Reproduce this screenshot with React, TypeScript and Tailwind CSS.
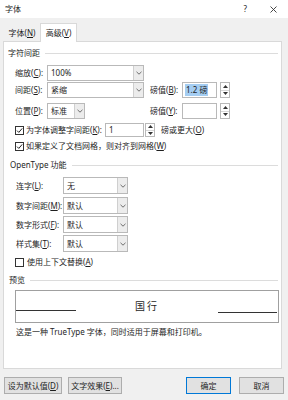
import type { ReactNode } from "react";

function Chevron() {
  return (
    <svg width="6" height="4" viewBox="0 0 6 4">
      <path d="M0.5 0.8 L3 3.2 L5.5 0.8" stroke="#606060" strokeWidth="0.9" fill="none" />
    </svg>
  );
}

function Select({ value, className }: { value: string; className: string }) {
  return (
    <div className={`flex h-full items-stretch border border-[#b9b9b9] bg-white ${className}`}>
      <span className="flex flex-1 items-center pl-[3px]">{value}</span>
      <span className="flex w-[10px] items-center justify-center border-l border-[#cfcfcf] bg-[#ececec]">
        <Chevron />
      </span>
    </div>
  );
}

function Spin() {
  return (
    <div className="flex h-full w-[10px] flex-col border border-[#b9b9b9] bg-white">
      <span className="flex flex-1 items-center justify-center border-b border-[#d6d6d6]">
        <svg width="5" height="3" viewBox="0 0 5 3">
          <path d="M0 3 L2.5 0 L5 3 Z" fill="#333" />
        </svg>
      </span>
      <span className="flex flex-1 items-center justify-center">
        <svg width="5" height="3" viewBox="0 0 5 3">
          <path d="M0 0 L2.5 3 L5 0 Z" fill="#333" />
        </svg>
      </span>
    </div>
  );
}

function Check({ on }: { on?: boolean }) {
  return (
    <span className="flex h-[9px] w-[9px] shrink-0 items-center justify-center border border-[#333] bg-white">
      {on && (
        <svg width="7" height="7" viewBox="0 0 7 7">
          <path d="M1 3.6 L2.8 5.4 L6.2 1.4" stroke="#222" strokeWidth="1" fill="none" />
        </svg>
      )}
    </span>
  );
}

function Key({ text, k, colon = true }: { text: string; k: string; colon?: boolean }) {
  return (
    <span className="whitespace-nowrap">
      {text}(<span className="underline">{k}</span>){colon ? ":" : ""}
    </span>
  );
}

function Group({ title, className }: { title: ReactNode; className: string }) {
  return (
    <div className={`flex h-[12px] items-center pr-[3px] ${className}`}>
      <span className="whitespace-nowrap">{title}</span>
      <span className="ml-[5px] h-px flex-1 bg-[#dcdcdc]" />
    </div>
  );
}

function OtRow({ label, k, value, className }: { label: string; k: string; value: string; className: string }) {
  return (
    <div className={`flex h-[17px] items-center ${className}`}>
      <span className="ml-[12px] w-[47px]">
        <Key text={label} k={k} />
      </span>
      <Select value={value} className="w-[65px]" />
    </div>
  );
}

export default function App() {
  return (
    <div className="h-[400px] w-[288px] overflow-hidden bg-[#f0f0f0] font-['Noto_Sans','Noto_Sans_CJK_SC',sans-serif] text-[8px] leading-[12px] text-[#1e1e1e]">
      {/* title bar */}
      <div className="flex h-[18px] items-center bg-white pl-[5px] pr-[11px]">
        <span>字体</span>
        <span className="ml-auto">?</span>
        <svg className="ml-[23px]" width="7" height="7" viewBox="0 0 7 7">
          <path d="M0.5 0.5 L6.5 6.5 M6.5 0.5 L0.5 6.5" stroke="#333" strokeWidth="0.9" />
        </svg>
      </div>

      {/* tabs */}
      <div className="flex h-[23px] items-end pl-[4px]">
        <div className="flex h-[17px] w-[36px] items-center justify-center">
          <Key text="字体" k="N" colon={false} />
        </div>
        <div className="relative z-10 -mb-px flex h-[19px] w-[37px] items-center justify-center border border-b-0 border-[#d9d9d9] bg-white pb-[1px]">
          <Key text="高级" k="V" colon={false} />
        </div>
      </div>

      {/* panel */}
      <div className="ml-[3px] flex h-[328px] w-[279px] flex-col border border-[#d9d9d9] bg-white">
        <Group title="字符间距" className="mt-[5px] pl-[4px]" />

        <div className="mt-[6px] flex h-[16px] items-center">
          <span className="ml-[11px] w-[32px]">
            <Key text="缩放" k="C" />
          </span>
          <Select value="100%" className="w-[97px]" />
        </div>

        <div className="mt-[1px] flex h-[16px] items-center">
          <span className="ml-[11px] w-[32px]">
            <Key text="间距" k="S" />
          </span>
          <Select value="紧缩" className="w-[97px]" />
          <span className="ml-[6px] w-[32px]">
            <Key text="磅值" k="B" />
          </span>
          <div className="flex h-full w-[35px] items-center border border-[#b9b9b9] bg-white pl-[2px]">
            <span className="bg-[#a4cdf2] px-[1px]">1.2 磅</span>
          </div>
          <div className="ml-[3px] h-full">
            <Spin />
          </div>
        </div>

        <div className="mt-[5px] flex h-[16px] items-center">
          <span className="ml-[11px] w-[32px]">
            <Key text="位置" k="P" />
          </span>
          <div className="h-full w-[97px]">
            <Select value="标准" className="w-[38px]" />
          </div>
          <span className="ml-[6px] w-[32px]">
            <Key text="磅值" k="Y" />
          </span>
          <div className="h-full w-[35px] border border-[#b9b9b9] bg-white" />
          <div className="ml-[3px] h-full">
            <Spin />
          </div>
        </div>

        <div className="mt-[4px] flex h-[14px] items-center">
          <span className="ml-[11px]">
            <Check on />
          </span>
          <span className="ml-[2px] w-[79px]">
            <Key text="为字体调整字间距" k="K" />
          </span>
          <div className="flex h-full w-[39px] items-center border border-[#b9b9b9] bg-white pl-[3px]">1</div>
          <div className="ml-[1px] h-full">
            <Spin />
          </div>
          <span className="ml-[6px]">
            <Key text="磅或更大" k="O" colon={false} />
          </span>
        </div>

        <div className="mt-[3px] flex h-[12px] items-center">
          <span className="ml-[11px]">
            <Check on />
          </span>
          <span className="ml-[2px]">
            <Key text="如果定义了文档网格，则对齐到网格" k="W" colon={false} />
          </span>
        </div>

        <Group title="OpenType 功能" className="mt-[7px] pl-[6px]" />

        <OtRow label="连字" k="L" value="无" className="mt-[6px]" />
        <OtRow label="数字间距" k="M" value="默认" className="mt-[3px]" />
        <OtRow label="数字形式" k="F" value="默认" className="mt-[2px]" />
        <OtRow label="样式集" k="T" value="默认" className="mt-[2px]" />

        <div className="mt-[4px] flex h-[12px] items-center">
          <span className="ml-[11px]">
            <Check />
          </span>
          <span className="ml-[3px]">
            <Key text="使用上下文替换" k="A" colon={false} />
          </span>
        </div>

        <Group title="预览" className="mt-[6px] pl-[5px]" />

        <div className="ml-[11px] mt-[4px] flex h-[33px] w-[264px] border border-[#a0a0a0]">
          <div className="mb-[11px] h-px w-[60px] self-end bg-[#333]" />
          <div className="flex flex-1 items-center justify-center pb-[2px] text-[10px] tracking-[2px]">国行</div>
          <div className="mb-[9px] mr-[1px] h-px w-[59px] self-end bg-[#333]" />
        </div>

        <div className="ml-[12px] mt-[3px] h-[12px] whitespace-nowrap">
          这是一种 TrueType 字体，同时适用于屏幕和打印机。
        </div>
      </div>

      {/* buttons */}
      <div className="mt-[8px] flex h-[17px]">
        <button className="ml-[4px] w-[58px] border border-[#adadad] bg-[#e1e1e1]">
          <Key text="设为默认值" k="D" colon={false} />
        </button>
        <button className="ml-[6px] w-[54px] border border-[#adadad] bg-[#e1e1e1]">
          <Key text="文字效果" k="E" colon={false} />
          ...
        </button>
        <button className="ml-[64px] w-[45px] border border-[#0078d7] bg-[#e1e1e1]">确定</button>
        <button className="ml-[8px] w-[45px] border border-[#adadad] bg-[#e1e1e1]">取消</button>
      </div>
    </div>
  );
}
